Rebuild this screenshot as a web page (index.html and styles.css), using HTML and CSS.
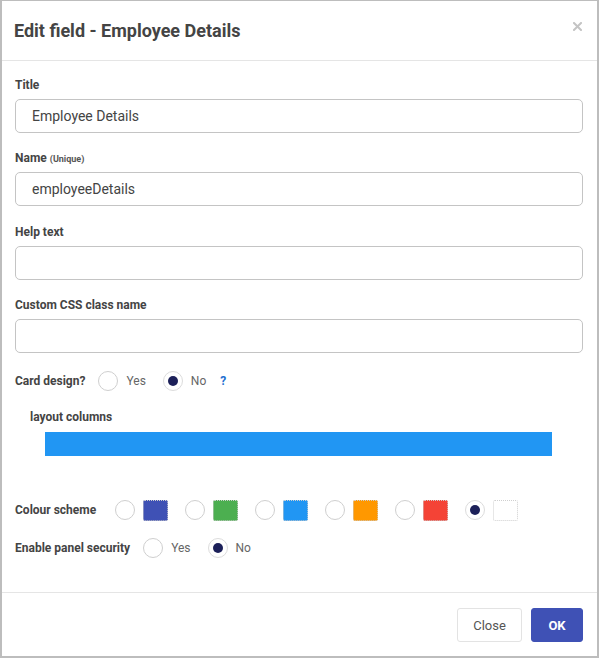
FILE: index.html
```html
<!DOCTYPE html>
<html>
<head>
<meta charset="utf-8">
<link rel="stylesheet" href="styles.css">
</head>
<body>
<div class="modal">
  <div class="modal-header">
    <h1 class="modal-title">Edit field - Employee Details</h1>
    <span class="close-x"><svg width="9" height="9" viewBox="0 0 9 9"><path d="M1 1L8 8M8 1L1 8" stroke="#c4c4c4" stroke-width="2" stroke-linecap="square"/></svg></span>
  </div>
  <div class="modal-body">
    <div class="group">
      <label class="label">Title</label>
      <div class="input">Employee Details</div>
    </div>
    <div class="group">
      <label class="label">Name <span class="small">(Unique)</span></label>
      <div class="input">employeeDetails</div>
    </div>
    <div class="group">
      <label class="label">Help text</label>
      <div class="input"></div>
    </div>
    <div class="group">
      <label class="label">Custom CSS class name</label>
      <div class="input"></div>
    </div>
    <div class="radio-row card-row">
      <span class="label inline">Card design?</span>
      <span class="radio"></span><span class="opt">Yes</span>
      <span class="radio checked"></span><span class="opt">No</span>
      <span class="help">?</span>
    </div>
    <div class="layout-block">
      <div class="label">layout columns</div>
      <div class="bar"></div>
    </div>
    <div class="radio-row colour-row">
      <span class="label inline">Colour scheme</span>
      <div class="swatches">
        <span class="swatch-opt"><span class="radio"></span><span class="swatch c-indigo"></span></span>
        <span class="swatch-opt"><span class="radio"></span><span class="swatch c-green"></span></span>
        <span class="swatch-opt"><span class="radio"></span><span class="swatch c-blue"></span></span>
        <span class="swatch-opt"><span class="radio"></span><span class="swatch c-orange"></span></span>
        <span class="swatch-opt"><span class="radio"></span><span class="swatch c-red"></span></span>
        <span class="swatch-opt"><span class="radio checked"></span><span class="swatch c-white"></span></span>
      </div>
    </div>
    <div class="radio-row security-row">
      <span class="label inline">Enable panel security</span>
      <span class="radio"></span><span class="opt">Yes</span>
      <span class="radio checked"></span><span class="opt">No</span>
    </div>
  </div>
  <div class="modal-footer">
    <button class="btn btn-close">Close</button>
    <button class="btn btn-ok">OK</button>
  </div>
</div>
</body>
</html>
```

FILE: styles.css
```css
* { box-sizing: border-box; }
html, body { margin: 0; padding: 0; background: #fff; }
body { font-family: Roboto, "Liberation Sans", Arial, sans-serif; color: #444; }

.modal {
  width: 599px;
  height: 658px;
  border-style: solid;
  border-color: #bdbdbd;
  border-width: 1px 2px 2px 2px;
  display: flex;
  flex-direction: column;
  background: #fff;
}

.modal-header {
  height: 60px;
  flex: none;
  border-bottom: 1px solid #e5e5e5;
  display: flex;
  align-items: center;
  justify-content: space-between;
  padding: 0 15px 0 12px;
}
.modal-title {
  margin: 0;
  font-size: 18px;
  font-weight: 700;
  color: #444;
  line-height: 24px;
  margin-top: 1px;
}
.close-x { display: flex; margin-top: -8px; }

.modal-body {
  flex: 1;
  padding: 16px 14px 0 13px;
}

.group { margin-bottom: 17.34px; }
.label {
  display: block;
  font-size: 12px;
  line-height: 16px;
  height: 16px;
  font-weight: 700;
  color: #444;
  margin-bottom: 6px;
}
.label.inline { display: inline-block; margin-bottom: 0; }
.small { font-size: 9px; line-height: 1; font-weight: 700; color: #555; }

.input {
  height: 34px;
  border: 1px solid #c4c4c4;
  border-radius: 5px;
  padding: 0 16px;
  font-size: 14px;
  line-height: 32px;
  color: #444;
}

.radio-row {
  display: flex;
  align-items: center;
  height: 20px;
}
.card-row { margin-top: 18px; }
.radio {
  width: 20px;
  height: 20px;
  border-radius: 50%;
  border: 1px solid #cfcfcf;
  flex: none;
  display: flex;
  align-items: center;
  justify-content: center;
  background: #fff;
}
.radio.checked { border-color: #dcdcdc; }
.radio.checked::after {
  content: "";
  width: 10px;
  height: 10px;
  border-radius: 50%;
  background: #1c2059;
}
.radio-row .label.inline { margin-right: 13px; }
.opt {
  font-size: 12px;
  color: #666;
  margin-left: 8px;
  margin-right: 17px;
}
.help {
  font-size: 12px;
  font-weight: 700;
  color: #1e6fd0;
  margin-left: -3px;
}

.layout-block { margin-top: 18px; padding-left: 15px; }
.layout-block .label { margin-bottom: 7px; }
.bar {
  margin-left: 15px;
  width: 507px;
  height: 24px;
  background: #2196f3;
}

.colour-row { margin-top: 44px; height: 21px; }
.colour-row .label.inline { margin-right: 19px; }
.swatches { display: flex; gap: 17px; }
.swatch-opt { display: flex; align-items: center; gap: 8px; }
.swatch {
  width: 25px;
  height: 21px;
  border-radius: 2px;
  border: 1px dotted #cfcfcf;
}
.c-indigo { background: #3f51b5; }
.c-green { background: #4caf50; }
.c-blue { background: #2196f3; }
.c-orange { background: #ff9800; }
.c-red { background: #f44336; }
.c-white { background: #fff; }

.security-row { margin-top: 17px; }

.modal-footer {
  height: 64px;
  flex: none;
  border-top: 1px solid #e5e5e5;
  display: flex;
  justify-content: flex-end;
  align-items: flex-start;
  gap: 9px;
  padding: 15px 14px 0 0;
}
.btn {
  height: 34px;
  border-radius: 3px;
  font-family: Roboto, "Liberation Sans", Arial, sans-serif;
  font-size: 13px;
  cursor: pointer;
}
.btn-close {
  width: 65px;
  background: #fff;
  border: 1px solid #e3e3e3;
  color: #555;
}
.btn-ok {
  width: 52px;
  background: #3f51b5;
  border: 1px solid #3f51b5;
  color: #fff;
  font-weight: 700;
}
```
